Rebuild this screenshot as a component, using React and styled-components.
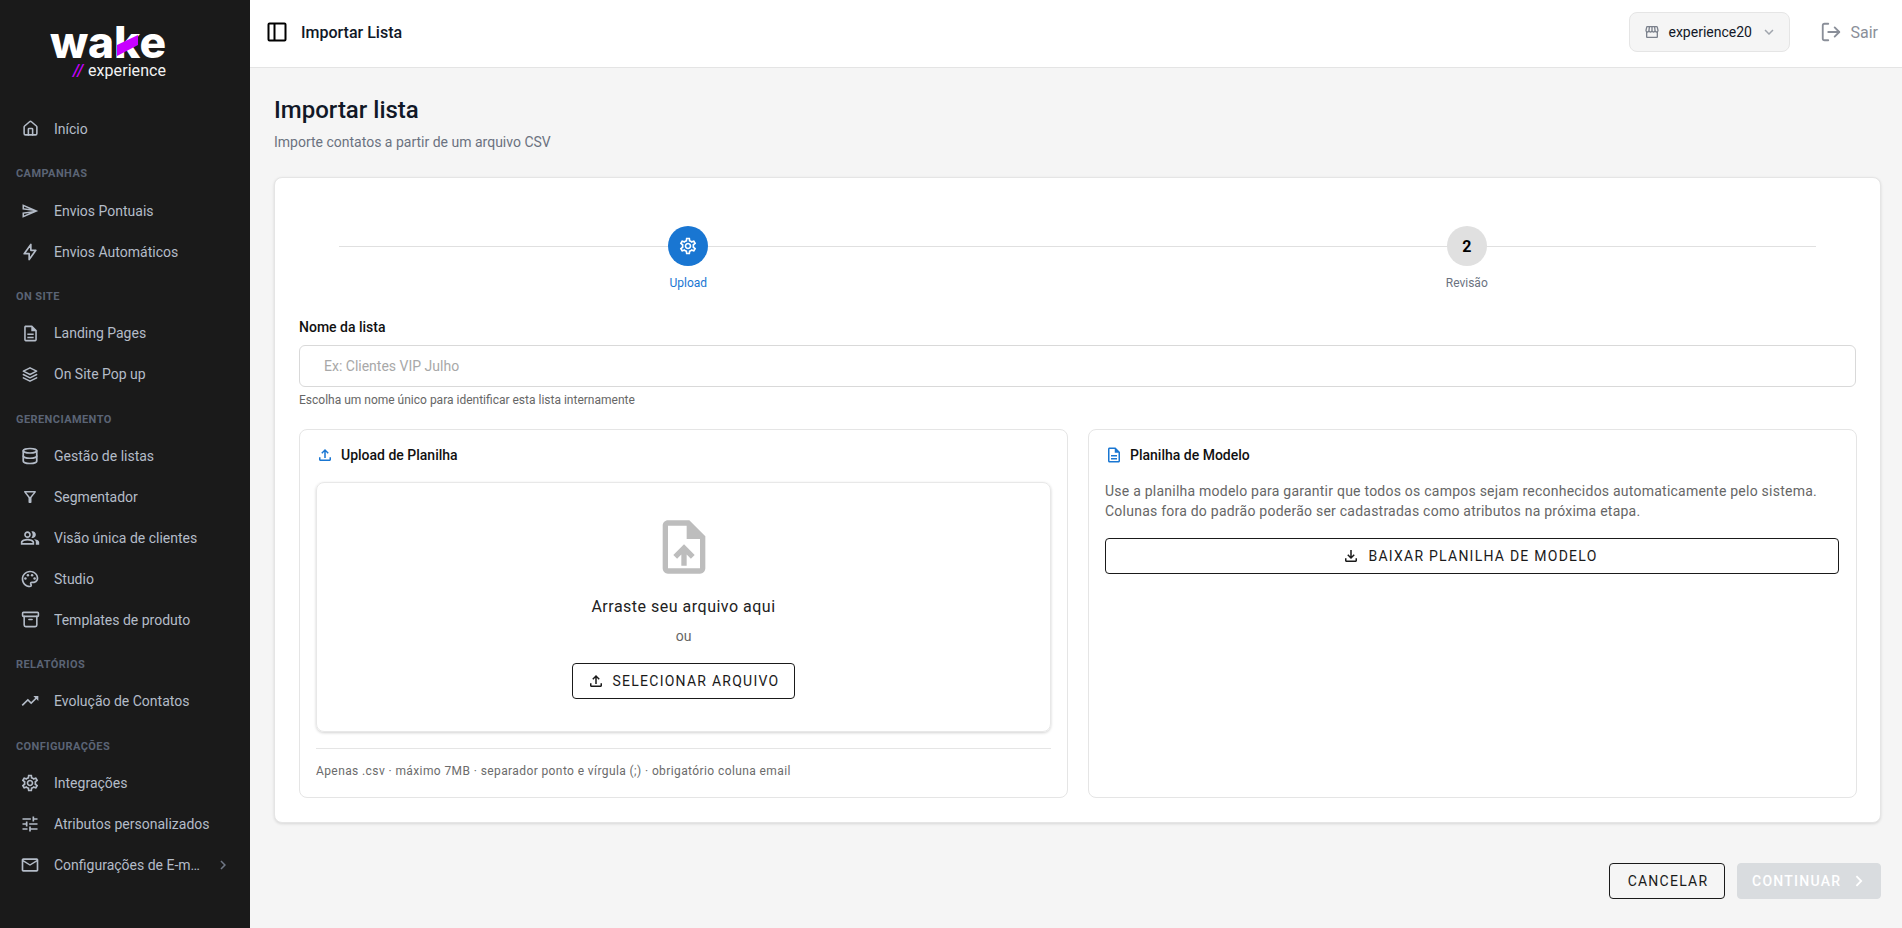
import React from 'react';
import styled, { createGlobalStyle } from 'styled-components';
import { Archive, Database, House, LogOut } from 'lucide-react';
import { TbBolt, TbStack2 } from 'react-icons/tb';
import {
  MdChevronRight,
  MdExpandMore,
  MdMailOutline,
  MdOutlineDescription,
  MdOutlineFileDownload,
  MdOutlineFileUpload,
  MdOutlineFilterAlt,
  MdOutlinePeopleAlt,
  MdOutlinePalette,
  MdOutlineSend,
  MdOutlineSettings,
  MdOutlineStorefront,
  MdOutlineUploadFile,
  MdTrendingUp,
  MdTune,
} from 'react-icons/md';

const GlobalStyle = createGlobalStyle`
  html, body {
    margin: 0;
    height: 100%;
    overflow: hidden;
    background: #f5f5f5;
    font-family: Roboto, "Liberation Sans", sans-serif;
  }
  * { box-sizing: border-box; }
`;

const menu = [
  { items: [{ label: 'Início', icon: <House size={17} strokeWidth={2.2} /> }] },
  {
    title: 'CAMPANHAS',
    items: [
      { label: 'Envios Pontuais', icon: <MdOutlineSend size={18} /> },
      { label: 'Envios Automáticos', icon: <TbBolt size={20} /> },
    ],
  },
  {
    title: 'ON SITE',
    items: [
      { label: 'Landing Pages', icon: <MdOutlineDescription size={19} /> },
      { label: 'On Site Pop up', icon: <TbStack2 size={23} strokeWidth={1.8} /> },
    ],
  },
  {
    title: 'GERENCIAMENTO',
    items: [
      { label: 'Gestão de listas', icon: <Database size={18} strokeWidth={2.3} /> },
      { label: 'Segmentador', icon: <MdOutlineFilterAlt size={18} /> },
      { label: 'Visão única de clientes', icon: <MdOutlinePeopleAlt size={20} /> },
      { label: 'Studio', icon: <MdOutlinePalette size={20} /> },
      { label: 'Templates de produto', icon: <Archive size={19} strokeWidth={2} /> },
    ],
  },
  {
    title: 'RELATÓRIOS',
    items: [{ label: 'Evolução de Contatos', icon: <MdTrendingUp size={20} /> }],
  },
  {
    title: 'CONFIGURAÇÕES',
    items: [
      { label: 'Integrações', icon: <MdOutlineSettings size={20} /> },
      { label: 'Atributos personalizados', icon: <MdTune size={20} /> },
      { label: 'Configurações de E-mail', icon: <MdMailOutline size={20} />, more: true },
    ],
  },
];

const Shell = styled.div`
  display: flex;
  width: 1902px;
  height: 928px;
  overflow: hidden;
`;

const Sidebar = styled.aside`
  width: 250px;
  flex-shrink: 0;
  background: #1a1a1a;
  display: flex;
  flex-direction: column;
`;

const LogoBox = styled.div`
  height: 108.5px;
  padding: 25px 0 0 48px;
  flex-shrink: 0;
`;

const SectionTitle = styled.div`
  height: 40.9px;
  padding: 18px 0 0 16px;
  font-size: 11px;
  line-height: 13px;
  font-weight: 700;
  letter-spacing: 0.42px;
  color: #5b6475;
`;

const NavItem = styled.div`
  height: 40.9px;
  display: flex;
  align-items: center;
  padding-left: 20px;
  padding-right: 20px;
  font-size: 14px;
  color: #b4bcc8;
`;

const NavIcon = styled.span`
  width: 20px;
  height: 20px;
  margin-right: 14px;
  display: flex;
  align-items: center;
  justify-content: center;
  flex-shrink: 0;
`;

const NavLabel = styled.span`
  flex: 1;
  min-width: 0;
  white-space: nowrap;
  overflow: hidden;
  text-overflow: ellipsis;
`;

const NavMore = styled.span`
  display: flex;
  color: #6f7785;
  margin-left: 12px;
  margin-right: -2px;
`;

const Main = styled.div`
  flex: 1;
  min-width: 0;
  display: flex;
  flex-direction: column;
`;

const Header = styled.header`
  height: 68px;
  flex-shrink: 0;
  background: #fff;
  border-bottom: 1px solid #e4e4e4;
  display: flex;
  align-items: center;
  padding: 0 24px 3px 16px;
`;

const HeaderTitle = styled.span`
  margin-left: 13px;
  font-size: 16px;
  font-weight: 500;
  color: #111827;
  flex: 1;
`;

const StoreSelect = styled.div`
  width: 161px;
  height: 40px;
  display: flex;
  align-items: center;
  padding-left: 14px;
  background: #f5f5f5;
  border: 1px solid #e5e5e5;
  border-radius: 8px;
  font-size: 14px;
  color: #111827;
  gap: 8px;
`;

const MutedIcon = styled.span`
  display: flex;
  color: ${p => p.$color || '#7b818c'};
`;

const Logout = styled.div`
  margin-left: 30px;
  display: flex;
  align-items: center;
  gap: 8px;
  font-size: 16px;
  color: #8a8f99;
`;

const Content = styled.main`
  flex: 1;
  padding: 26px 21px 0 24px;
  background: #f5f5f5;
`;

const PageTitle = styled.h1`
  margin: 0;
  font-size: 24px;
  line-height: 32px;
  font-weight: 500;
  color: #111827;
`;

const PageSubtitle = styled.p`
  margin: 6px 0 25px;
  font-size: 14px;
  line-height: 20px;
  color: #6b7280;
`;

const Card = styled.section`
  height: 646px;
  background: #fff;
  border: 1px solid #e5e5e5;
  border-radius: 8px;
  box-shadow: 0 1px 3px rgba(0, 0, 0, 0.12);
  padding: 48px 24px 24px;
`;

const Stepper = styled.div`
  position: relative;
  display: grid;
  grid-template-columns: 1fr 1fr;
`;

const StepLine = styled.div`
  position: absolute;
  top: 20px;
  left: 40px;
  right: 40px;
  height: 1px;
  background: #e0e0e0;
`;

const Step = styled.div`
  position: relative;
  display: flex;
  flex-direction: column;
  align-items: center;
`;

const StepCircle = styled.div`
  width: 40px;
  height: 40px;
  border-radius: 50%;
  display: flex;
  align-items: center;
  justify-content: center;
  background: ${p => (p.$active ? '#1976d2' : '#e0e0e0')};
  color: ${p => (p.$active ? '#fff' : '#000')};
  font-size: 16px;
  font-weight: 700;
`;

const StepLabel = styled.span`
  margin-top: 9px;
  font-size: 12px;
  line-height: 16px;
  color: ${p => (p.$active ? '#1976d2' : '#6b7280')};
`;

const FieldLabel = styled.label`
  display: block;
  margin-top: 26px;
  font-size: 14px;
  line-height: 20px;
  font-weight: 500;
  color: #111;
`;

const Input = styled.input`
  display: block;
  width: 100%;
  height: 42px;
  margin-top: 8px;
  padding: 0 24px;
  border: 1px solid #d9d9d9;
  border-radius: 6px;
  background: #fff;
  font-family: inherit;
  font-size: 14px;
  outline: none;
  &::placeholder { color: #a8a8a8; opacity: 1; }
`;

const Helper = styled.p`
  margin: 5px 0 21px;
  font-size: 12px;
  line-height: 16px;
  color: #666;
`;

const Panels = styled.div`
  display: grid;
  grid-template-columns: 769px 769px;
  gap: 20px;
`;

const Panel = styled.div`
  height: 369px;
  border: 1px solid #e5e5e5;
  border-radius: 8px;
  padding: 15px 16px 0;
  display: flex;
  flex-direction: column;
`;

const PanelTitle = styled.h3`
  margin: 0;
  display: flex;
  align-items: center;
  gap: 7px;
  font-size: 14px;
  line-height: 20px;
  font-weight: 500;
  color: #111;
  svg { color: #1976d2; }
`;

const DropZone = styled.div`
  height: 250px;
  margin-top: 17px;
  border: 1px solid #e8e8e8;
  border-radius: 8px;
  box-shadow: 0 1px 3px rgba(0, 0, 0, 0.18);
  padding-top: 32px;
  display: flex;
  flex-direction: column;
  align-items: center;
  svg.big { color: #bdbdbd; }
`;

const DropText = styled.div`
  margin-top: 16px;
  font-size: 16px;
  line-height: 24px;
  letter-spacing: 0.5px;
  color: #222;
`;

const DropOr = styled.div`
  margin-top: 7px;
  font-size: 14px;
  line-height: 21px;
  color: #666;
`;

const OutlineButton = styled.button`
  display: inline-flex;
  align-items: center;
  justify-content: center;
  gap: 8px;
  height: 36px;
  width: ${p => p.$width || 'auto'};
  margin-top: ${p => p.$top || '0'};
  padding: 0 15px 0 14px;
  background: transparent;
  border: 1px solid #1a1a1a;
  border-radius: 4px;
  font-family: inherit;
  font-size: 14px;
  letter-spacing: 1.25px;
  color: #1a1a1a;
`;

const WideButton = styled(OutlineButton)`
  width: calc(100% - 1px);
  flex-shrink: 0;
  padding-right: 18px;
`;

const CancelButton = styled(OutlineButton)`
  width: 116px;
  padding: 0 14px 0 16px;
`;

const DisabledButton = styled(OutlineButton)`
  width: 144px;
  background: #d9dcdf;
  border-color: #d9dcdf;
  color: #fff;
  font-weight: 500;
  svg { margin: 0 -5px 0 -1px; }
`;

const FileNote = styled.div`
  margin-top: 16px;
  padding-top: 14px;
  border-top: 1px solid #e5e5e5;
  font-size: 12px;
  line-height: 16px;
  letter-spacing: 0.4px;
  color: #6b6b6b;
`;

const PanelText = styled.p`
  margin: 16px 0 17px;
  font-size: 14px;
  line-height: 20px;
  letter-spacing: 0.235px;
  color: #666;
`;

const Actions = styled.div`
  margin-top: 40px;
  display: flex;
  justify-content: flex-end;
  gap: 12px;
`;

function Logo() {
  return (
    <svg width="130" height="62" viewBox="0 0 130 62">
      <text x="2" y="33" fontFamily="Inter, Roboto, sans-serif" fontWeight="800" fontSize="44" textLength="116" lengthAdjust="spacingAndGlyphs" fill="#fff">wake</text>
      <polygon points="69,20 90,10 90,20 69,31" fill="#c800ff" />
      <text x="25" y="51" fontFamily="Roboto, sans-serif" fontStyle="italic" fontWeight="500" fontSize="16" fill="#c800ff">//</text>
      <text x="40" y="51" fontFamily="Roboto, sans-serif" fontSize="16" textLength="78" fill="#f2f2f2">experience</text>
    </svg>
  );
}

function PanelToggleIcon() {
  return (
    <svg width="22" height="22" viewBox="0 0 22 22" fill="none" stroke="#000" strokeWidth="2">
      <rect x="2.5" y="2.5" width="17" height="17" rx="1" />
      <line x1="8.5" y1="2.5" x2="8.5" y2="19.5" />
    </svg>
  );
}

export default function App() {
  return (
    <Shell>
      <GlobalStyle />
      <Sidebar>
        <LogoBox>
          <Logo />
        </LogoBox>
        {menu.map((group, i) => (
          <React.Fragment key={i}>
            {group.title && <SectionTitle>{group.title}</SectionTitle>}
            {group.items.map(item => (
              <NavItem key={item.label}>
                <NavIcon>{item.icon}</NavIcon>
                <NavLabel>{item.label}</NavLabel>
                {item.more && (
                  <NavMore>
                    <MdChevronRight size={18} />
                  </NavMore>
                )}
              </NavItem>
            ))}
          </React.Fragment>
        ))}
      </Sidebar>
      <Main>
        <Header>
          <PanelToggleIcon />
          <HeaderTitle>Importar Lista</HeaderTitle>
          <StoreSelect>
            <MutedIcon>
              <MdOutlineStorefront size={16} />
            </MutedIcon>
            experience20
            <MutedIcon $color="#a0a5ad">
              <MdExpandMore size={18} />
            </MutedIcon>
          </StoreSelect>
          <Logout>
            <LogOut size={22} strokeWidth={2} />
            Sair
          </Logout>
        </Header>
        <Content>
          <PageTitle>Importar lista</PageTitle>
          <PageSubtitle>Importe contatos a partir de um arquivo CSV</PageSubtitle>
          <Card>
            <Stepper>
              <StepLine />
              <Step>
                <StepCircle $active>
                  <MdOutlineSettings size={20} />
                </StepCircle>
                <StepLabel $active>Upload</StepLabel>
              </Step>
              <Step>
                <StepCircle>2</StepCircle>
                <StepLabel>Revisão</StepLabel>
              </Step>
            </Stepper>
            <FieldLabel>Nome da lista</FieldLabel>
            <Input placeholder="Ex: Clientes VIP Julho" />
            <Helper>Escolha um nome único para identificar esta lista internamente</Helper>
            <Panels>
              <Panel>
                <PanelTitle>
                  <MdOutlineFileUpload size={18} />
                  Upload de Planilha
                </PanelTitle>
                <DropZone>
                  <MdOutlineUploadFile className="big" size={64} />
                  <DropText>Arraste seu arquivo aqui</DropText>
                  <DropOr>ou</DropOr>
                  <OutlineButton $top="16px">
                    <MdOutlineFileUpload size={18} />
                    SELECIONAR ARQUIVO
                  </OutlineButton>
                </DropZone>
                <FileNote>Apenas .csv · máximo 7MB · separador ponto e vírgula (;) · obrigatório coluna email</FileNote>
              </Panel>
              <Panel>
                <PanelTitle>
                  <MdOutlineDescription size={18} />
                  Planilha de Modelo
                </PanelTitle>
                <PanelText>
                  Use a planilha modelo para garantir que todos os campos sejam reconhecidos automaticamente pelo sistema.
                  <br />
                  Colunas fora do padrão poderão ser cadastradas como atributos na próxima etapa.
                </PanelText>
                <WideButton>
                  <MdOutlineFileDownload size={18} />
                  BAIXAR PLANILHA DE MODELO
                </WideButton>
              </Panel>
            </Panels>
          </Card>
          <Actions>
            <CancelButton>CANCELAR</CancelButton>
            <DisabledButton>
              CONTINUAR
              <MdChevronRight size={22} />
            </DisabledButton>
          </Actions>
        </Content>
      </Main>
    </Shell>
  );
}
